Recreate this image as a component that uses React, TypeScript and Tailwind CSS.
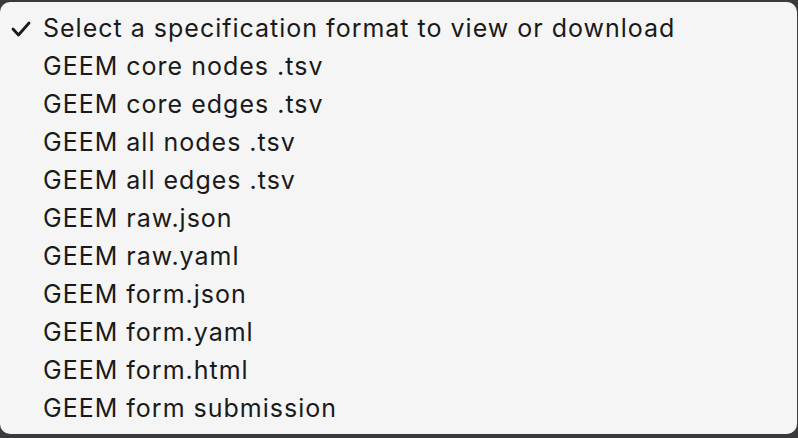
const options = [
  "GEEM core nodes .tsv",
  "GEEM core edges .tsv",
  "GEEM all nodes .tsv",
  "GEEM all edges .tsv",
  "GEEM raw.json",
  "GEEM raw.yaml",
  "GEEM form.json",
  "GEEM form.yaml",
  "GEEM form.html",
  "GEEM form submission",
];

function Check() {
  return (
    <svg width="20" height="16" viewBox="0 0 20 16" className="shrink-0">
      <path
        d="M2 8 L7.5 14 L18 2"
        fill="none"
        stroke="#1a1a1a"
        strokeWidth="2.8"
        strokeLinecap="round"
        strokeLinejoin="round"
      />
    </svg>
  );
}

export default function App() {
  return (
    <div className="h-[438px] w-[798px] bg-[#3a3a3c] pt-[2px]">
      <div
        className="h-[432px] w-[797px] rounded-[10px] bg-[#f5f5f5] pt-[8px] text-[25px] tracking-[1px] text-[#1a1a1a]"
        style={{ fontFamily: "Inter, 'Liberation Sans', sans-serif" }}
      >
        <div className="flex h-[38px] items-center">
          <div className="flex w-[43px] justify-end pr-[12px]">
            <Check />
          </div>
          <span>Select a specification format to view or download</span>
        </div>
        {options.map((o) => (
          <div key={o} className="flex h-[38px] items-center pl-[43px]">
            {o}
          </div>
        ))}
      </div>
    </div>
  );
}
